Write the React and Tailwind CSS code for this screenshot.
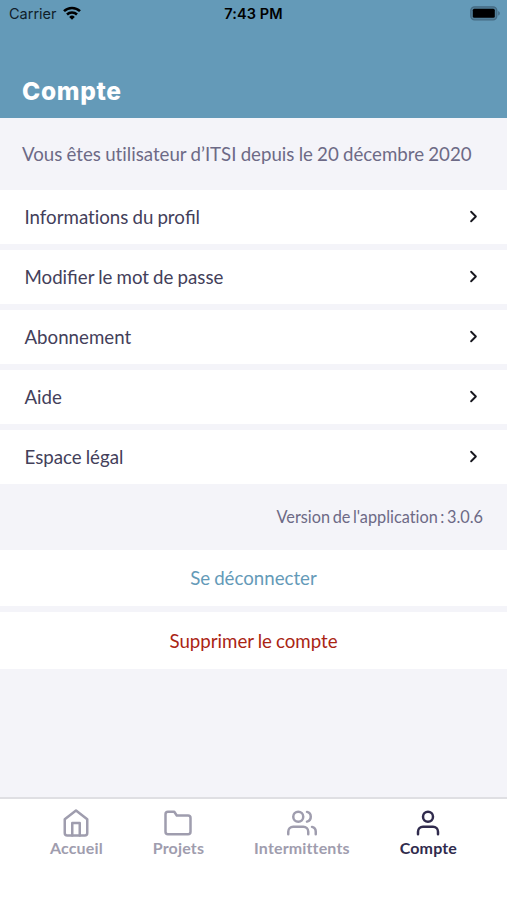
import React from "react";
import { FiHome, FiFolder, FiUsers, FiUser, FiChevronRight } from "react-icons/fi";

const menuItems = [
  "Informations du profil",
  "Modifier le mot de passe",
  "Abonnement",
  "Aide",
  "Espace légal",
];

const tabs = [
  { label: "Accueil", icon: FiHome },
  { label: "Projets", icon: FiFolder },
  { label: "Intermittents", icon: FiUsers },
  { label: "Compte", icon: FiUser, active: true },
];

function StatusBar() {
  return (
    <div className="grid h-7 grid-cols-3 items-center pl-[9px] pr-[7px] font-['Inter',sans-serif] text-black">
      <div className="flex items-center gap-1.5">
        <span className="text-[14.5px] leading-7 text-[#10202a]">Carrier</span>
        <svg className="-mt-0.5" width="18" height="14" viewBox="0 0 18 14" fill="none" stroke="currentColor" strokeWidth="2.5">
          <path d="M1 5.2a11.3 11.3 0 0 1 16 0" />
          <path d="M4 8.5a7.1 7.1 0 0 1 10 0" />
          <path d="M6.2 10.9a4 4 0 0 1 5.6 0L9 13.8z" fill="currentColor" stroke="none" />
        </svg>
      </div>
      <span className="-ml-0.5 text-center text-[14.5px] font-semibold leading-7 tracking-[0.1px] [word-spacing:0px]">7:43 PM</span>
      <svg className="-mt-0.5 justify-self-end" width="30" height="15" viewBox="0 0 30 15">
        <rect x="0.8" y="0.8" width="26" height="13" rx="3.8" fill="#527f99" stroke="#456b82" strokeWidth="1.3" />
        <rect x="2.8" y="2.8" width="22" height="9" rx="1.5" fill="#000" />
        <path d="M28.2 5v4.6c1-.4 1.6-1.3 1.6-2.3s-.6-1.9-1.6-2.3z" fill="#456b82" />
      </svg>
    </div>
  );
}

// keeps the "fi" ligature while the other ligatures stay off
function Label({ text }) {
  return text.split(/(fi)/).map((part, i) => (
    <span key={i} className={part === "fi" ? "[font-variant-ligatures:common-ligatures]" : ""}>
      {part}
    </span>
  ));
}

function MenuRow({ label }) {
  return (
    <button className="flex h-[54px] w-full cursor-pointer items-center justify-between bg-white pl-[24.5px] pr-6 text-[#43405a]">
      <span className="text-[18.7px] leading-6 [word-spacing:-0.7px]"><Label text={label} /></span>
      <FiChevronRight className="-mt-px size-[19px] text-[#18181f]" strokeWidth={2.4} />
    </button>
  );
}

export default function App() {
  return (
    <div className="flex h-[900px] w-[507px] flex-col overflow-hidden bg-[#f4f4f9] font-['Lato',sans-serif] [font-variant-ligatures:no-common-ligatures] [word-spacing:-0.6px]">
      <header className="h-[118px] shrink-0 bg-[#649ab8]">
        <StatusBar />
        <h1 className="mt-[47px] pl-[22px] font-['Inter',sans-serif] text-[24.5px] font-extrabold leading-8 tracking-[0.7px] text-white">Compte</h1>
      </header>

      <main className="flex-1">
        <p className="flex h-[72px] items-center whitespace-nowrap pl-[22px] text-[18.7px] text-[#6d6a86]">
          Vous êtes utilisateur d’ITSI depuis le 20 décembre 2020
        </p>

        <div className="flex flex-col gap-1.5">
          {menuItems.map((item) => (
            <MenuRow key={item} label={item} />
          ))}
        </div>

        <p className="flex h-[66px] items-center justify-end pr-6 text-[16.3px] text-[#6d6a86] [word-spacing:-1.6px]">
          Version de l'application : 3.0.6
        </p>

        <div className="flex flex-col gap-1.5 text-[18.7px]">
          <button className="h-14 cursor-pointer bg-white pt-px text-[#649ab8] [word-spacing:-0.8px]">Se déconnecter</button>
          <button className="h-[57px] cursor-pointer bg-white pt-0.5 text-[#aa2413] [word-spacing:-0.8px]">Supprimer le compte</button>
        </div>
      </main>

      <nav className="flex h-[103px] shrink-0 items-start justify-evenly border-t-2 border-[#dfdfe3] bg-white pt-[9px]">
        {tabs.map(({ label, icon: Icon, active }) => (
          <button
            key={label}
            className={`flex cursor-pointer flex-col items-center ${active ? "text-[#302b4d]" : "text-[#9f9dae]"}`}
          >
            <Icon className="size-[30px]" />
            <span className="text-base font-bold leading-5 tracking-[0.15px]">{label}</span>
          </button>
        ))}
      </nav>
    </div>
  );
}
